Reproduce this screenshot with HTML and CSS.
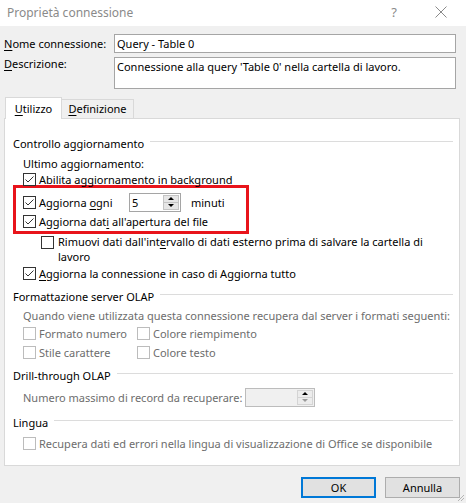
FILE: index.html
```html
<!DOCTYPE html>
<html lang="it">
<head>
    <meta charset="UTF-8">
    <meta name="viewport" content="width=device-width, initial-scale=1.0">
    <title>Proprietà connessione</title>
    <link rel="stylesheet" href="styles.css">
</head>
<body>
<div class="window">

    <div class="titlebar">
        <span class="title">Proprietà connessione</span>
        <span class="help">?</span>
        <svg class="close" viewBox="0 0 12 12" width="12" height="12">
            <path d="M0.5 0.5 L11.5 11.5 M11.5 0.5 L0.5 11.5" stroke="#8a8a8a" stroke-width="1" fill="none"/>
        </svg>
    </div>

    <div class="field-row">
        <label class="field-label"><u>N</u>ome connessione:</label>
        <div class="textbox">Query - Table 0</div>
    </div>
    <div class="field-row desc-row">
        <label class="field-label"><u>D</u>escrizione:</label>
        <div class="textbox textarea">Connessione alla query 'Table 0' nella cartella di lavoro.</div>
    </div>

    <div class="tabs">
        <div class="tab active"><u>U</u>tilizzo</div>
        <div class="tab"><u>D</u>efinizione</div>
    </div>

    <div class="panel">
        <div class="group-title first"><span>Controllo aggiornamento</span><i class="rule"></i></div>
        <div class="row indent ultimo">Ultimo aggiornamento:</div>
        <div class="row indent">
            <span class="box checked"><svg viewBox="0 0 11 11"><path d="M1.5 5.5 L4 8 L9.5 2.5" /></svg></span>
            <span>Abilita aggiornamento in background</span>
        </div>

        <div class="highlight">
            <div class="row spin-row">
                <span class="box checked"><svg viewBox="0 0 11 11"><path d="M1.5 5.5 L4 8 L9.5 2.5" /></svg></span>
                <span class="spin-label">Aggiorna <u>o</u>gni</span>
                <div class="spinner">
                    <span class="spin-value">5</span>
                    <span class="spin-buttons">
                        <span class="spin-btn"><i class="arrow-up"></i></span>
                        <span class="spin-btn"><i class="arrow-down"></i></span>
                    </span>
                </div>
                <span class="unit">minuti</span>
            </div>
            <div class="row open-row">
                <span class="box checked"><svg viewBox="0 0 11 11"><path d="M1.5 5.5 L4 8 L9.5 2.5" /></svg></span>
                <span>Aggiorna dat<u>i</u> all'apertura del file</span>
            </div>
        </div>

        <div class="row sub-row">
            <span class="box"></span>
            <span class="wrap-text">Rimuovi dati dall'int<u>e</u>rvallo di dati esterno prima di salvare la cartella di<br>lavoro</span>
        </div>
        <div class="row indent all-row">
            <span class="box checked"><svg viewBox="0 0 11 11"><path d="M1.5 5.5 L4 8 L9.5 2.5" /></svg></span>
            <span><u>A</u>ggiorna la connessione in caso di Aggiorna tutto</span>
        </div>

        <div class="group-title"><span>Formattazione server OLAP</span><i class="rule"></i></div>
        <div class="row indent disabled quando">Quando viene utilizzata questa connessione recupera dal server i formati seguenti:</div>
        <div class="format-grid disabled">
            <div class="row"><span class="box"></span><span>Formato numero</span></div>
            <div class="row"><span class="box"></span><span>Colore riempimento</span></div>
            <div class="row"><span class="box"></span><span>Stile carattere</span></div>
            <div class="row"><span class="box"></span><span>Colore testo</span></div>
        </div>

        <div class="group-title"><span>Drill-through OLAP</span><i class="rule"></i></div>
        <div class="row indent disabled records">
            <span class="records-label">Numero massimo di record da recuperare:</span>
            <div class="spinner wide">
                <span class="spin-value"></span>
                <span class="spin-buttons">
                    <span class="spin-btn"><i class="arrow-up"></i></span>
                    <span class="spin-btn"><i class="arrow-down"></i></span>
                </span>
            </div>
        </div>

        <div class="group-title"><span>Lingua</span><i class="rule"></i></div>
        <div class="row indent disabled lang">
            <span class="box"></span>
            <span>Recupera dati ed errori nella lingua di visualizzazione di Office se disponibile</span>
        </div>
    </div>

    <div class="buttons">
        <button class="btn default">OK</button>
        <button class="btn">Annulla</button>
    </div>

    <svg class="grip" viewBox="0 0 10 10" width="10" height="10">
        <path d="M9 3 L3 9 M9 6 L6 9" stroke="#b5b5b5" stroke-width="1" fill="none"/>
    </svg>
</div>
</body>
</html>
```

FILE: styles.css
```css
body {
    margin: 0;
    background-color: #f0f0f0;
    font-family: 'Noto Sans', 'Segoe UI', sans-serif;
    font-size: 11px;
    color: #000;
}

.window {
    position: relative;
    width: 466px;
    height: 503px;
    overflow: hidden;
}

u {
    text-decoration-thickness: 1px;
    text-underline-offset: 2px;
}

/* title bar */

.titlebar {
    display: flex;
    align-items: center;
    height: 26px;
    background-color: #fff;
    color: #8a8a8a;
}

.title {
    margin-left: 7px;
    margin-top: -2px;
    font-size: 12px;
}

.help {
    margin-left: auto;
    margin-top: -2px;
    font-size: 13px;
}

.close {
    margin-left: 38px;
    margin-right: 19px;
    margin-top: -2px;
}

/* name / description */

.field-row {
    display: flex;
    align-items: center;
    margin-top: 8px;
    padding-left: 4px;
}

.field-label {
    width: 110px;
}

.textbox {
    box-sizing: border-box;
    width: 342px;
    height: 19px;
    padding: 0 2px;
    line-height: 17px;
    background-color: #fff;
    border: 1px solid #a5a5a5;
}

.desc-row {
    align-items: flex-start;
    margin-top: 4px;
}

.desc-row .field-label {
    margin-top: -1px;
    line-height: 16px;
}

.textarea {
    height: 32px;
    padding-top: 1px;
    line-height: 16px;
}

/* tabs */

.tabs {
    display: flex;
    align-items: flex-end;
    margin-top: 8px;
    margin-left: 5px;
}

.tab {
    box-sizing: border-box;
    width: 73px;
    height: 19px;
    margin-left: -1px;
    line-height: 18px;
    text-align: center;
    border: 1px solid #d9d9d9;
    border-bottom: none;
    background-color: #f0f0f0;
}

.tab.active {
    position: relative;
    z-index: 1;
    width: 57px;
    height: 22px;
    margin-left: 0;
    margin-bottom: -1px;
    line-height: 21px;
    background-color: #fff;
}

.panel {
    box-sizing: border-box;
    width: 456px;
    height: 348px;
    margin-left: 4px;
    padding: 16px 6px 0 8px;
    background-color: #fff;
    border: 1px solid #d9d9d9;
}

.group-title {
    display: flex;
    align-items: center;
    height: 16px;
    margin-top: 7px;
}

.group-title.first {
    margin-top: 0;
}

.rule {
    flex: 1;
    height: 1px;
    margin-left: 6px;
    margin-top: -3px;
    background-color: #dcdcdc;
}

.row {
    display: flex;
    align-items: center;
    height: 16px;
}

.indent {
    margin-left: 10px;
}

.ultimo {
    margin-top: 4px;
}

.box {
    box-sizing: border-box;
    flex: none;
    width: 13px;
    height: 13px;
    margin-right: 3px;
    background-color: #fff;
    border: 1px solid #333;
}

.box svg {
    display: block;
    width: 11px;
    height: 11px;
}

.box svg path {
    fill: none;
    stroke: #333;
    stroke-width: 1;
}

.disabled {
    color: #6d6d6d;
}

.disabled .box {
    border-color: #bcbcbc;
}

/* red marker around the two options */

.highlight {
    box-sizing: border-box;
    width: 236px;
    height: 49px;
    margin-top: -2px;
    padding: 4px 0 0 7px;
    border: 3px solid #e8141b;
}

.spin-row {
    height: 20px;
}

.spin-label {
    width: 90px;
}

.spinner {
    box-sizing: border-box;
    display: flex;
    width: 52px;
    height: 19px;
    background-color: #fff;
    border: 1px solid #a5a5a5;
}

.spin-value {
    flex: 1;
    padding-left: 2px;
    line-height: 17px;
}

.spin-buttons {
    display: flex;
    flex-direction: column;
    width: 16px;
    padding: 1px 1px 1px 0;
}

.spin-btn {
    display: flex;
    flex: 1;
    align-items: center;
    justify-content: center;
    background-color: #e6e6e6;
    border: 1px solid #c4c4c4;
}

.spin-btn + .spin-btn {
    border-top: none;
}

.arrow-up,
.arrow-down {
    width: 0;
    height: 0;
    border-left: 3px solid transparent;
    border-right: 3px solid transparent;
}

.arrow-up {
    border-bottom: 3px solid #000;
}

.arrow-down {
    border-top: 3px solid #000;
}

.unit {
    margin-left: 10px;
}

.open-row {
    height: 19px;
}

.sub-row {
    align-items: flex-start;
    height: 28px;
    margin-top: 2px;
    margin-left: 28px;
}

.sub-row .box {
    margin-top: 0;
    margin-right: 4px;
}

.wrap-text {
    margin-top: -2px;
    line-height: 15px;
}

.all-row {
    margin-top: 1px;
}

.quando {
    margin-top: 3px;
}

.format-grid {
    display: grid;
    grid-template-columns: 114px auto;
    row-gap: 3px;
    margin-top: 2px;
    margin-left: 10px;
}

.records {
    height: 20px;
    margin-top: 4px;
}

.records-label {
    width: 222px;
}

.spinner.wide {
    width: 70px;
    background-color: #f0f0f0;
    border-color: #bcbcbc;
}

.spinner.wide .spin-btn {
    background-color: #ececec;
    border-color: #d4d4d4;
}

.spinner.wide .arrow-down {
    border-top-color: #9a9a9a;
}

.lang {
    margin-top: 5px;
}

/* dialog buttons */

.buttons {
    display: flex;
    justify-content: flex-end;
    gap: 9px;
    margin-top: 11px;
    padding-right: 6px;
}

.btn {
    box-sizing: border-box;
    width: 75px;
    height: 21px;
    padding: 0;
    font-family: inherit;
    font-size: 11px;
    color: #000;
    background-color: #e1e1e1;
    border: 1px solid #adadad;
}

.btn.default {
    border: 2px solid #0078d7;
}

.grip {
    position: absolute;
    right: 1px;
    bottom: 1px;
}
```
